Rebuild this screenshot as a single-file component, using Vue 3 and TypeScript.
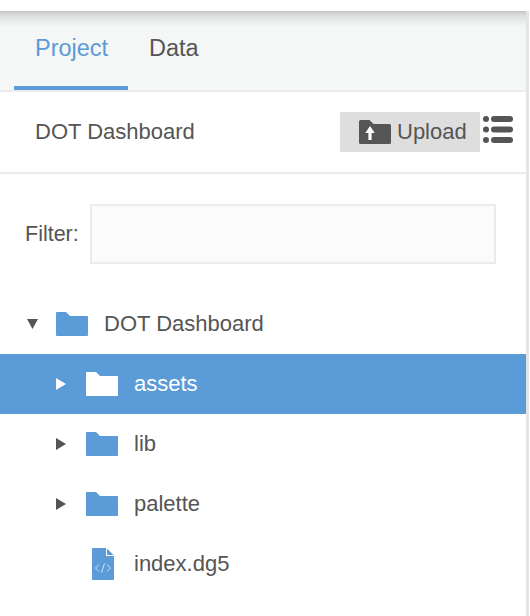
<script setup lang="ts">
interface Row { name: string; depth: number; kind: 'folder' | 'file'; arrow?: 'open' | 'closed'; selected?: boolean }
const rows: Row[] = [
  { name: 'DOT Dashboard', depth: 0, kind: 'folder', arrow: 'open' },
  { name: 'assets', depth: 1, kind: 'folder', arrow: 'closed', selected: true },
  { name: 'lib', depth: 1, kind: 'folder', arrow: 'closed' },
  { name: 'palette', depth: 1, kind: 'folder', arrow: 'closed' },
  { name: 'index.dg5', depth: 1, kind: 'file' },
]
</script>

<template>
  <div class="page">
    <div class="panel">
      <nav class="tabs">
        <div class="tab active">Project</div>
        <div class="tab">Data</div>
      </nav>
      <header class="toolbar">
        <span class="title">DOT Dashboard</span>
        <div class="actions">
          <button class="upload">
            <svg class="upload-icon" viewBox="0 0 32 24" width="32" height="24">
              <path d="M1.500 0H10.500L14.500 4H30.500A1.500 1.500 0 0 1 32 5.500V22.500A1.500 1.500 0 0 1 30.500 24H1.500A1.500 1.500 0 0 1 0 22.500V1.500A1.500 1.500 0 0 1 1.500 0Z" fill="#555" />
              <path d="M6.300 13 11 6l4.700 7H12.600V20H9.400V13Z" fill="#fff" />
            </svg>
            <span>Upload</span>
          </button>
          <svg class="list-icon" viewBox="0 0 31 27" width="31" height="27">
            <g fill="#555">
              <circle cx="3" cy="3" r="3" /><rect x="8" y="0" width="22" height="6" rx="3" />
              <circle cx="3" cy="13.500" r="3" /><rect x="8" y="10.500" width="22" height="6" rx="3" />
              <circle cx="3" cy="24" r="3" /><rect x="8" y="21" width="22" height="6" rx="3" />
            </g>
          </svg>
        </div>
      </header>
      <div class="filter">
        <label class="filter-label" for="filter">Filter:</label>
        <input id="filter" class="filter-input" type="text" />
      </div>
      <ul class="tree">
        <li v-for="row in rows" :key="row.name" class="row" :class="[{ selected: row.selected }, 'depth-' + row.depth]">
          <span class="arrow-slot">
            <svg v-if="row.arrow === 'open'" class="arrow-open" viewBox="0 0 11 10" width="11" height="10"><path d="M0 0H11L5.500 10Z" /></svg>
            <svg v-else-if="row.arrow === 'closed'" viewBox="0 0 10 12" width="10" height="12"><path d="M0 0L10 6L0 12Z" /></svg>
          </span>
          <span class="icon-slot">
            <svg v-if="row.kind === 'folder'" class="folder" viewBox="0 0 32 24" width="32" height="24">
              <path d="M1 0H10L14 4H31A1 1 0 0 1 32 5V23A1 1 0 0 1 31 24H1A1 1 0 0 1 0 23V1A1 1 0 0 1 1 0Z" />
            </svg>
            <svg v-else class="file" viewBox="0 0 22 32" width="22" height="32">
              <path d="M1 0H14V8H22V31A1 1 0 0 1 21 32H1A1 1 0 0 1 0 31V1A1 1 0 0 1 1 0Z" fill="#5a9bd8" />
              <path d="M15 0.500 21.500 7H15Z" fill="#5a9bd8" />
              <g fill="none" stroke="#cfe2f4" stroke-width="1">
                <path d="M7 16.500 3.500 20 7 23.500" />
                <path d="M15 16.500 18.500 20 15 23.500" />
                <path d="M12.500 15.500 9.500 24.500" />
              </g>
            </svg>
          </span>
          <span class="name">{{ row.name }}</span>
        </li>
      </ul>
    </div>
  </div>
</template>

<style scoped>
.page {
  width: 530px;
  height: 616px;
  padding-top: 11px;
  box-sizing: border-box;
  background: #fff;
  font-family: "Liberation Sans", Arial, sans-serif;
  color: #555;
  overflow: hidden;
}
.panel {
  width: 529px;
  height: 605px;
  box-sizing: border-box;
  border-right: 3px solid #e4e4e4;
  background: #fff;
}
.tabs {
  display: flex;
  height: 79px;
  padding-left: 14px;
  background: linear-gradient(#c4c6c6 0, #dfe1e1 5px, #f5f7f7 16px);
  border-bottom: 2px solid #ebebeb;
}
.tab {
  display: flex;
  align-items: center;
  height: 79px;
  box-sizing: border-box;
  border-bottom: 4px solid transparent;
  font-size: 23.500px;
}
.tab.active {
  width: 114px;
  padding-left: 21px;
  color: #5a9bd8;
  border-bottom-color: #5a9bd8;
}
.tab + .tab { margin-left: 21px; }
.toolbar {
  display: flex;
  align-items: center;
  justify-content: space-between;
  height: 80px;
  padding-left: 35px;
  border-bottom: 2px solid #ebebeb;
}
.title { font-size: 22px; }
.actions { display: flex; align-items: center; }
.upload {
  display: flex;
  align-items: center;
  gap: 6px;
  width: 140px;
  height: 40px;
  padding: 0 0 0 19px;
  border: none;
  background: #dedede;
  color: #555;
  font: 22px "Liberation Sans", Arial, sans-serif;
  box-sizing: border-box;
}
.upload-icon { flex: none; }
.list-icon { margin-left: 3px; margin-right: 12px; margin-top: -5px; }
.filter {
  display: flex;
  align-items: center;
  gap: 11px;
  height: 60px;
  margin-top: 30px;
  padding-left: 25px;
}
.filter-label { font-size: 21.500px; }
.filter-input {
  width: 406px;
  height: 60px;
  box-sizing: border-box;
  border: 2px solid #ebebeb;
  background: #fbfbfb;
  outline: none;
}
.tree {
  list-style: none;
  margin: 30px 0 0;
  padding: 0;
}
.row {
  display: flex;
  align-items: center;
  height: 60px;
  font-size: 22px;
}
.row.depth-1 { padding-left: 30px; }
.row.selected { background: #5a9bd8; color: #fff; }
.arrow-slot {
  width: 56px;
  padding-left: 26px;
  box-sizing: border-box;
  display: flex;
  align-items: center;
  flex: none;
  fill: #555;
}
.arrow-open { margin-left: 1px; }
.selected .arrow-slot { fill: #fff; }
.icon-slot {
  width: 48px;
  display: flex;
  justify-content: flex-start;
  flex: none;
}
.folder { fill: #5a9bd8; }
.selected .folder { fill: #fff; }
.file { margin-left: 6px; }
</style>
